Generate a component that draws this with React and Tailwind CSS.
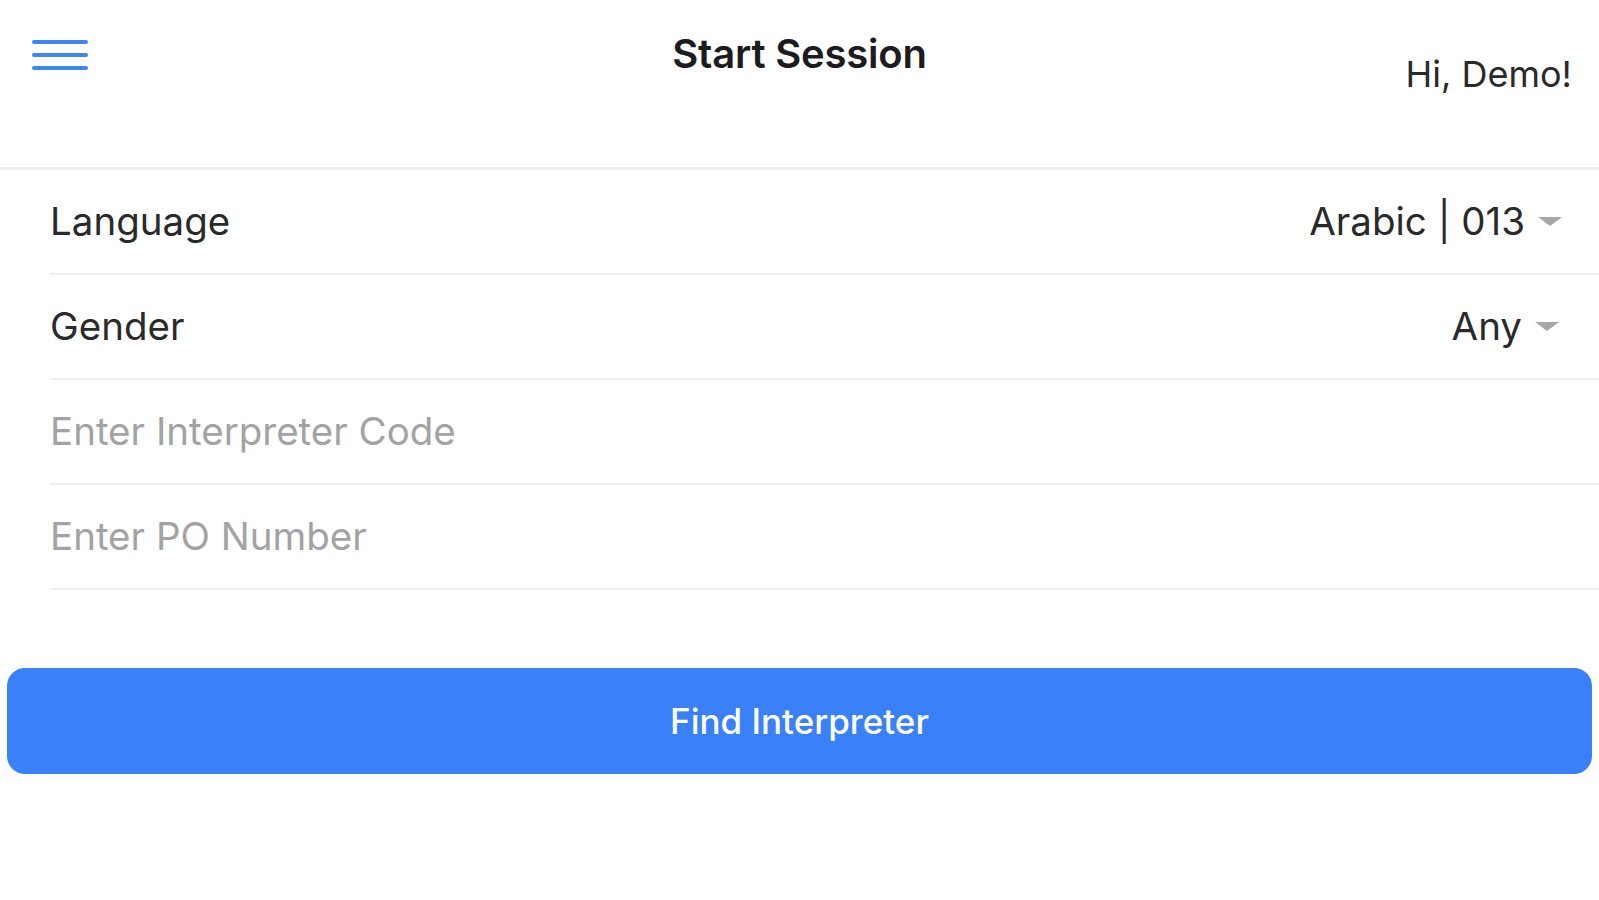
import React from "react";

function Caret() {
  return (
    <svg width="24" height="9" viewBox="0 0 24 9" className="shrink-0">
      <polygon points="0,0 24,0 12,9" fill="#a8a8a8" />
    </svg>
  );
}

export default function App() {
  return (
    <div className="w-[1599px] h-[900px] bg-white overflow-hidden text-[#1c1c1e]" style={{ fontFamily: "Inter, 'Liberation Sans', sans-serif" }}>
      <header className="h-[170px] border-b-[3px] border-[#efefef] flex items-start justify-between">
        <div className="pl-[32px] pt-[40px] w-[200px]">
          <div className="flex flex-col gap-[9px] w-[56px]">
            <div className="h-[4px] rounded-full bg-[#3f86f5]" />
            <div className="h-[4px] rounded-full bg-[#3f86f5]" />
            <div className="h-[4px] rounded-full bg-[#3f86f5]" />
          </div>
        </div>
        <div className="pt-[30px] text-[40px] font-semibold leading-[48px] tracking-[-0.2px]">Start Session</div>
        <div className="w-[200px] pt-[52px] pr-[27px] text-right text-[36px] leading-[44px] text-[#2a2a2a]">Hi, Demo!</div>
      </header>

      <div className="ml-[50px]">
        <div className="h-[105px] border-b-2 border-[#efefef] flex items-center justify-between pr-[37px]">
          <span className="text-[38.5px] text-[#2a2a2a]">Language</span>
          <div className="flex items-center gap-[13px]">
            <span className="text-[38.5px] text-[#2a2a2a]">Arabic | 013</span>
            <Caret />
          </div>
        </div>
        <div className="h-[105px] border-b-2 border-[#efefef] flex items-center justify-between pr-[40px]">
          <span className="text-[38.5px] text-[#2a2a2a]">Gender</span>
          <div className="flex items-center gap-[13px]">
            <span className="text-[38.5px] text-[#2a2a2a]">Any</span>
            <Caret />
          </div>
        </div>
        <div className="h-[105px] border-b-2 border-[#efefef] flex items-center">
          <span className="text-[38.5px] text-[#a3a3a3]">Enter Interpreter Code</span>
        </div>
        <div className="h-[105px] border-b-2 border-[#efefef] flex items-center">
          <span className="text-[38.5px] text-[#a3a3a3]">Enter PO Number</span>
        </div>
      </div>

      <div className="px-[7px] pt-[78px]">
        <button className="w-full h-[106px] rounded-[18px] bg-[#3a80f8] text-white text-[35px] font-medium flex items-center justify-center">
          Find Interpreter
        </button>
      </div>
    </div>
  );
}
